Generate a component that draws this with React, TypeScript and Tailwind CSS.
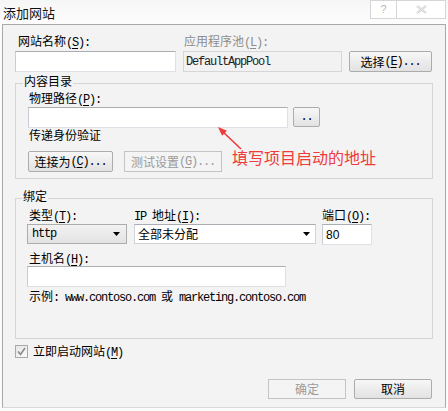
import React from "react";

const CJK = /([\u2E80-\u9FFF\uFF00-\uFFEF]+)/;

const Latin = ({ s }: { s: string }) => {
  const [a, b] = s.split("&");
  return (
    <span className="font-['Liberation_Mono',monospace] text-[12px] tracking-[-1.2px]">
      {a}
      {b !== undefined && (
        <>
          <span className="underline underline-offset-2">{b[0]}</span>
          {b.slice(1)}
        </>
      )}
    </span>
  );
};

// mixed CJK / latin label, "&" marks the access key
const Txt = ({ s }: { s: string }) => (
  <>
    {s
      .split(CJK)
      .filter(Boolean)
      .map((p, i) => (CJK.test(p) ? <span key={i}>{p}</span> : <Latin key={i} s={p} />))}
  </>
);

const Label = ({ s, className = "" }: { s: string; className?: string }) => (
  <div className={`h-[14px] leading-[14px] whitespace-nowrap ${className}`}>
    <Txt s={s} />
  </div>
);

const inputCls =
  "h-[21px] bg-white border border-[#dde1e6] border-t-[#abadb3] border-l-[#c9ccd2]";

const Button = ({
  s,
  className = "",
  disabled = false,
}: {
  s: string;
  className?: string;
  disabled?: boolean;
}) => (
  <div
    className={`flex items-center justify-center leading-[14px] whitespace-nowrap ${
      disabled
        ? "border border-[#c3c3c3] bg-[#f4f4f4] text-[#9a9a9a]"
        : "border border-[#acacac] rounded-[2px] bg-linear-to-b from-[#f7f7f7] to-[#e2e2e2] text-black"
    } ${className}`}
  >
    <Txt s={s} />
  </div>
);

const Arrow = () => (
  <svg width="7" height="4" viewBox="0 0 7 4">
    <polygon points="0,0 7,0 3.5,4" fill="#000" />
  </svg>
);

export default function App() {
  return (
    <div className="relative w-[448px] h-[411px] overflow-hidden bg-[#fbfbfb] font-['Noto_Sans_CJK_SC','Noto_Sans',sans-serif] text-[12px] text-black">
      {/* title bar */}
      <div className="flex h-[24px] items-start justify-between bg-linear-to-b from-[#f6f6f6] to-[#fdfdfd]">
        <div className="pl-[3px] pt-[4px] text-[13px] leading-[17px] text-[#111]">添加网站</div>
        <div className="flex h-[19px] mr-[2px]">
          <div className="flex w-[27px] items-center justify-center border border-[#d6d6d6] bg-white text-[11px] text-[#b5b5b5] font-['Liberation_Sans',sans-serif]">
            ?
          </div>
          <div className="flex w-[49px] items-center justify-center border border-l-0 border-[#d6d6d6] bg-white">
            <svg width="11" height="9" viewBox="0 0 11 9">
              <path d="M1 1 L10 8 M10 1 L1 8" stroke="#c4c4c4" strokeWidth="2.2" fill="none" />
              <path d="M1 1 L10 8 M10 1 L1 8" stroke="#fff" strokeWidth="0.8" fill="none" />
            </svg>
          </div>
        </div>
      </div>

      {/* dialog body */}
      <div className="ml-[2px] w-[444px] h-[384px] border border-[#a9a9a9] border-b-[#d9d9d9] bg-[#f3f3f3] pl-[12px] pr-[12px] pt-[9px]">
        {/* site name row */}
        <div className="flex">
          <div className="w-[161px]">
            <Label s="网站名称(&S):" className="pl-[3px]" />
            <div className={`${inputCls} mt-[3px]`} />
          </div>
          <div className="ml-[7px] w-[159px]">
            <Label s="应用程序池(&L):" className="pl-[1px] text-[#8d8d8d]" />
            <div className="mt-[3px] flex h-[21px] items-center border border-[#d6d6d6] bg-[#f2f2f2] pl-[2px] text-[#222]">
              <Latin s="DefaultAppPool" />
            </div>
          </div>
          <div className="ml-[7px] w-[83px] pt-[17px]">
            <Button s="选择(&E)..." className="h-[21px]" />
          </div>
        </div>

        {/* content directory */}
        <div className="mt-[2px] ml-[8px] w-fit bg-[#f3f3f3] px-[1px] h-[14px] leading-[14px] relative -mb-[5px]">
          内容目录
        </div>
        <div className="w-[418px] border border-[#d5d5d5] pl-[12px] pt-[7px] pb-[6px]">
          <Label s="物理路径(&P):" className="pl-[1px]" />
          <div className="mt-[2px] flex">
            <div className={`${inputCls} w-[260px]`} />
            <Button s=".." className="ml-[5px] w-[27px] h-[20px]" />
          </div>
          <Label s="传递身份验证" className="pl-[1px]" />
          <div className="mt-[9px] flex">
            <Button s="连接为(&C)..." className="w-[85px] h-[21px]" />
            <Button s="测试设置(&G)..." disabled className="ml-[11px] w-[98px] h-[21px]" />
          </div>
        </div>

        {/* binding */}
        <div className="mt-[10px] ml-[7px] w-fit bg-[#f3f3f3] px-[1px] h-[14px] leading-[14px] relative -mb-[5px]">
          绑定
        </div>
        <div className="w-[418px] border border-[#d5d5d5] pl-[11px] pt-[9px] pb-[35px]">
          <div className="flex">
            <div className="w-[100px]">
              <Label s="类型(&T):" className="pl-[2px]" />
              <div className="mt-[2px] flex h-[20px] items-center justify-between border border-[#acacac] bg-linear-to-b from-[#f2f2f2] to-[#e3e3e3] pl-[4px] pr-[6px]">
                <Latin s="http" />
                <Arrow />
              </div>
            </div>
            <div className="ml-[7px] w-[182px]">
              <Label s="IP 地址(&I):" />
              <div className="mt-[2px] flex h-[20px] items-center justify-between border border-[#d0d3d8] border-t-[#abadb3] bg-white pl-[3px] pr-[5px] leading-[14px]">
                <span>全部未分配</span>
                <Arrow />
              </div>
            </div>
            <div className="ml-[6px] w-[50px]">
              <Label s="端口(&O):" />
              <div className={`${inputCls} mt-[2px] h-[20px] flex items-center pl-[3px] font-['Liberation_Sans',sans-serif]`}>
                80
              </div>
            </div>
          </div>
          <Label s="主机名(&H):" className="mt-[6px] pl-[2px]" />
          <div className={`${inputCls} mt-[1px] w-[259px]`} />
          <Label s="示例: www.contoso.com 或 marketing.contoso.com" className="mt-[2px] pl-[2px]" />
        </div>

        {/* start immediately */}
        <div className="mt-[5px] flex items-center">
          <div className="flex h-[13px] w-[13px] items-center justify-center border border-[#a9a9a9] bg-linear-to-br from-[#e6e6e6] to-[#fafafa]">
            <svg width="9" height="9" viewBox="0 0 9 9">
              <path d="M1 4.5 L3.5 7.5 L8 1" stroke="#8a8a8a" strokeWidth="1.6" fill="none" />
            </svg>
          </div>
          <Label s="立即启动网站(&M)" className="ml-[5px]" />
        </div>

        {/* footer buttons */}
        <div className="mt-[21px] flex justify-end pr-[1px]">
          <Button s="确定" disabled className="w-[78px] h-[20px]" />
          <Button s="取消" className="ml-[8px] w-[78px] h-[20px]" />
        </div>
      </div>

      {/* red annotation */}
      <svg className="absolute left-[214px] top-[123px]" width="32" height="30" viewBox="0 0 32 30">
        <line x1="8" y1="8" x2="27" y2="26" stroke="#ee3b3b" strokeWidth="1.6" />
        <polygon points="4,4 8.1,12.7 12.9,7.7" fill="#ee3b3b" />
      </svg>
      <div className="absolute left-[232px] top-[147px] text-[16px] leading-[20px] text-[#ee3b3b] whitespace-nowrap">
        填写项目启动的地址
      </div>
    </div>
  );
}
